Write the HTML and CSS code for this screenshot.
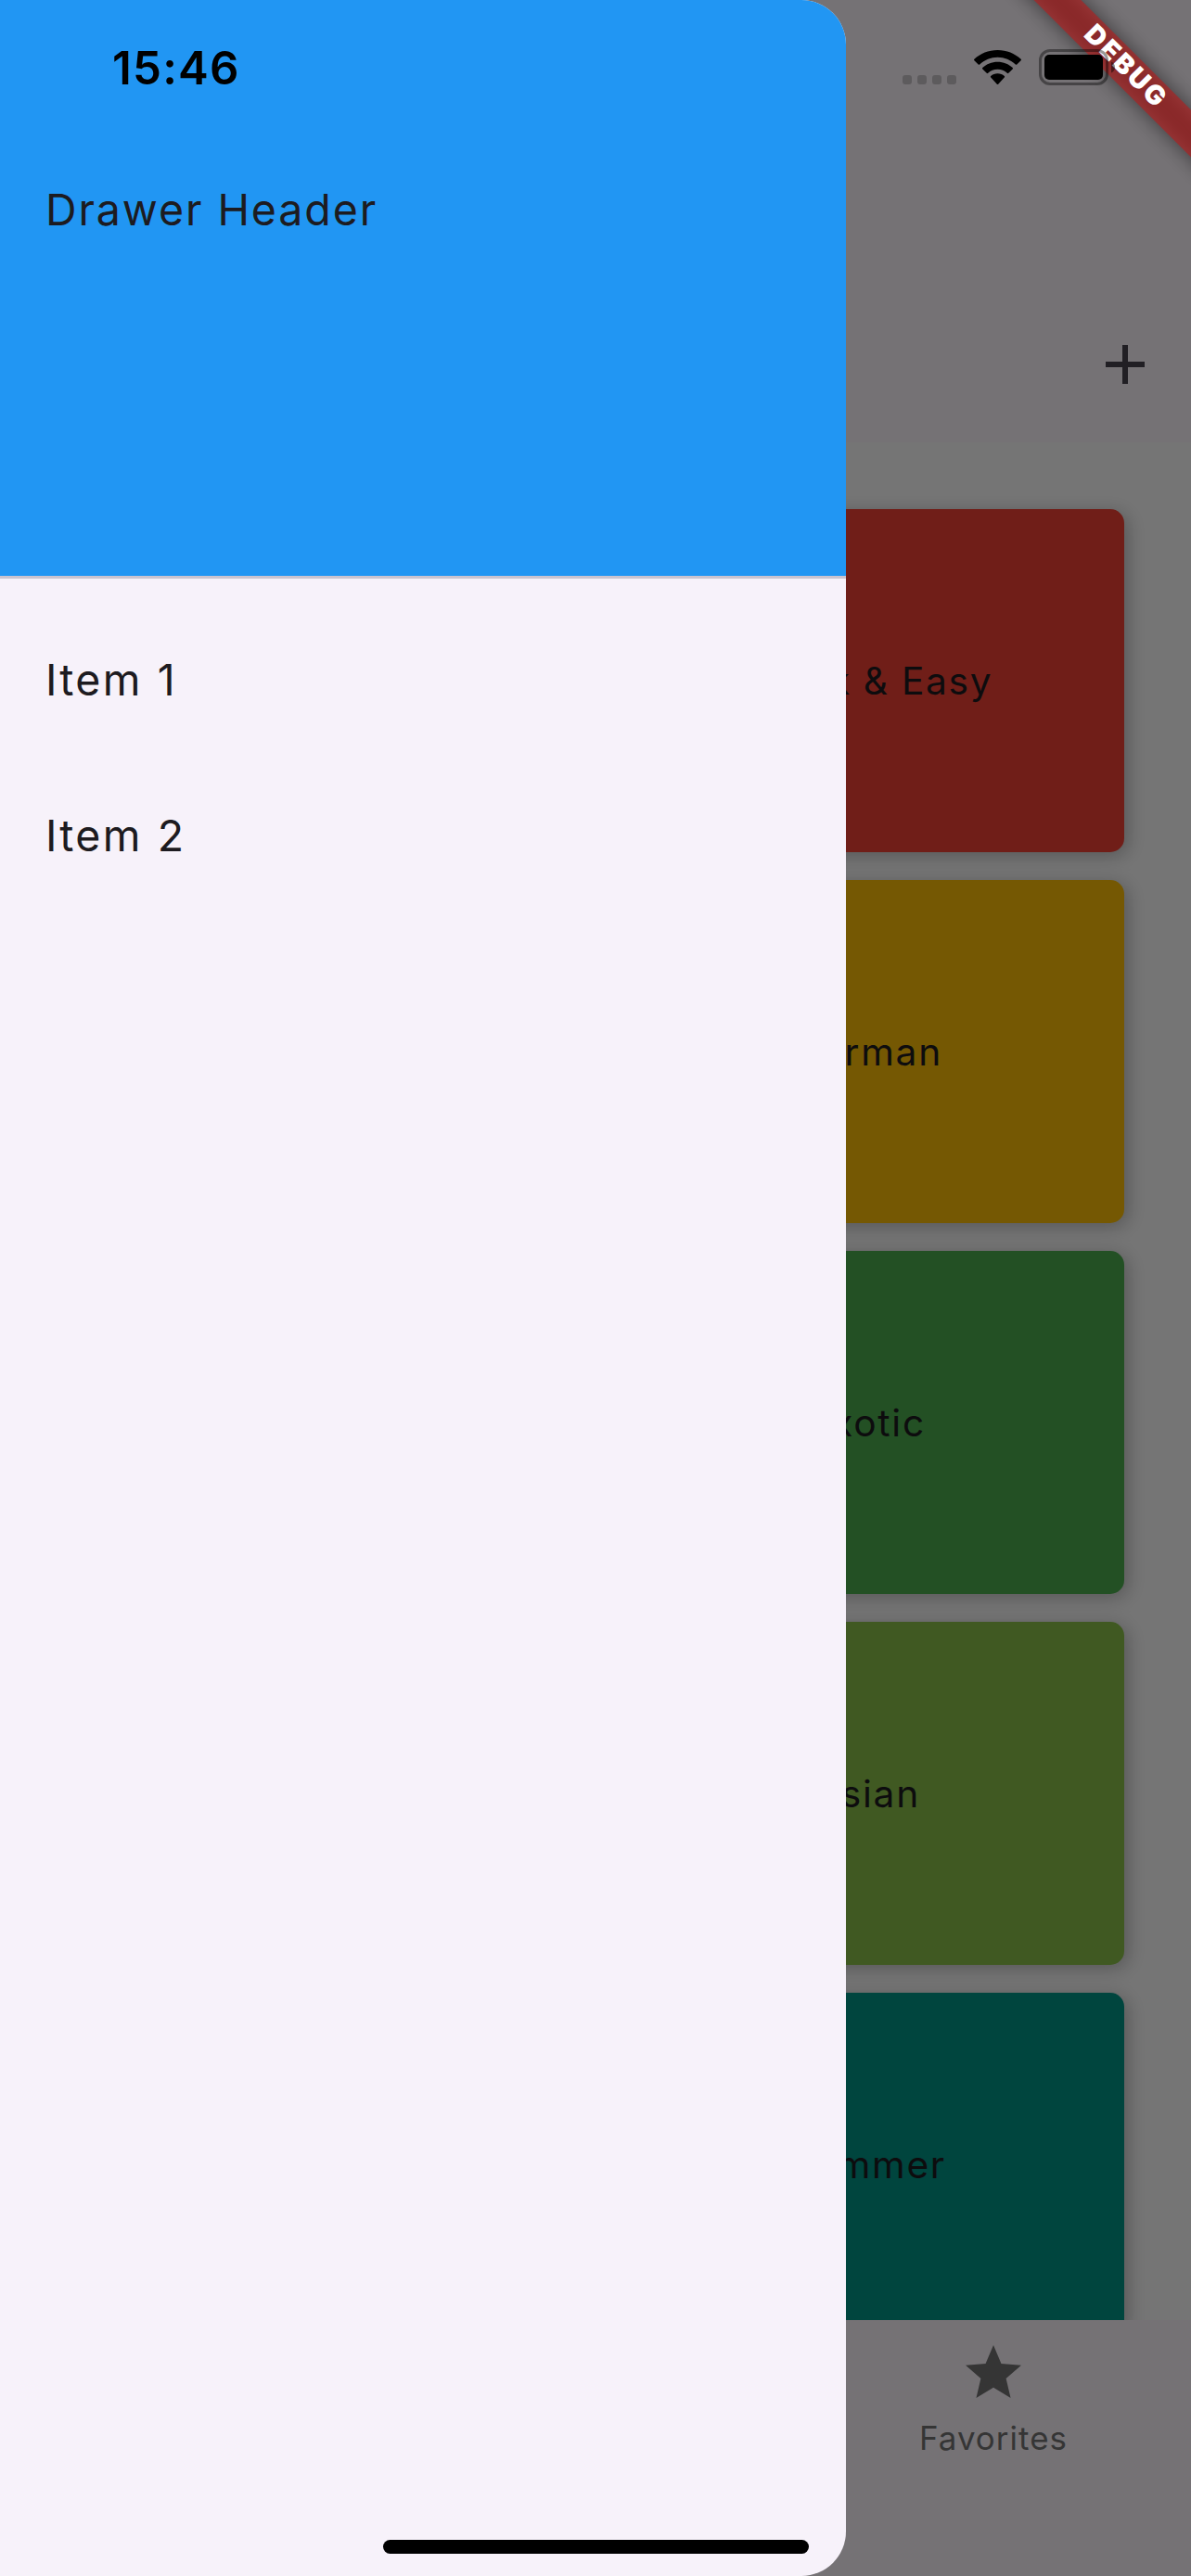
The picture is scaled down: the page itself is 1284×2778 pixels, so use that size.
FILE: index.html
```
<!DOCTYPE html>
<html lang="en">
<head>
<meta charset="utf-8">
<title>Categories</title>
<link rel="stylesheet" href="styles.css">
</head>
<body>
<div class="screen">
  <div class="app">
    <header class="app-bar">
      <svg class="add-icon" viewBox="0 0 24 24"><path d="M19 13h-6v6h-2v-6H5v-2h6V5h2v6h6v2z"/></svg>
    </header>
    <main class="grid">
      <article class="card red">Quick &amp; Easy</article>
      <article class="card amber">German</article>
      <article class="card green">Exotic</article>
      <article class="card light-green">Asian</article>
      <article class="card teal">Summer</article>
    </main>
    <nav class="tabs">
      <div class="tab">
        <svg class="tab-icon" viewBox="0 0 24 24"><path d="M12 17.27L18.18 21l-1.64-7.03L22 9.24l-7.19-.61L12 2 9.19 8.63 2 9.24l5.46 4.73L5.82 21z"/></svg>
        <span>Favorites</span>
      </div>
    </nav>
  </div>

  <div class="scrim"></div>

  <aside class="drawer">
    <div class="drawer-header">Drawer Header</div>
    <ul class="drawer-list">
      <li class="drawer-item">Item 1</li>
      <li class="drawer-item">Item 2</li>
    </ul>
  </aside>

  <div class="banner"><span class="banner-text">DEBUG</span></div>

  <div class="status-bar">
    <time class="clock">15:46</time>
    <div class="status-icons">
      <svg class="signal" width="59" height="10" viewBox="0 0 59 10">
        <rect width="10" height="10" rx="3"/><rect x="16" width="10" height="10" rx="3"/><rect x="32" width="10" height="10" rx="3"/><rect x="48" width="10" height="10" rx="3"/>
      </svg>
      <svg class="wifi" width="51" height="38" viewBox="0 0 51 38">
        <path d="M25.5 0C35.300 0 44 3.700 50.600 9.700q.7.700 0 1.500L46.300 15.500q-.7.700-1.500 0C39.600 10.700 32.900 7.700 25.500 7.700S11.400 10.700 6.200 15.500q-.8.700-1.500 0L.4 11.200q-.7-.8 0-1.500C7 3.700 15.700 0 25.500 0z"/>
        <path d="M25.500 12.700c6.300 0 12 2.400 16.200 6.300q.7.700 0 1.500l-4.400 4.300q-.7.700-1.500 0c-2.700-2.500-6.300-4-10.300-4s-7.600 1.500-10.300 4q-.8.700-1.500 0L9.300 20.500q-.7-.8 0-1.500c4.200-3.900 9.900-6.300 16.200-6.300z"/>
        <path d="M25.500 25.300c2.800 0 5.400 1 7.300 2.700q.8.700 0 1.500l-6.600 7.200q-.7.700-1.400 0l-6.600-7.200q-.8-.8 0-1.500c1.900-1.700 4.500-2.700 7.300-2.700z"/>
      </svg>
      <svg class="battery" width="82" height="39" viewBox="0 0 82 39">
        <rect x="1.500" y="1.500" width="72" height="36" rx="10.500" fill="none" stroke="#000" stroke-opacity=".4" stroke-width="3"/>
        <rect x="6" y="6" width="63" height="27" rx="5"/>
        <path d="M78 13.500c2.600 1.100 4 3.300 4 6s-1.400 4.900-4 6z" fill-opacity=".45"/>
      </svg>
    </div>
  </div>

  <div class="home-indicator"></div>
</div>
</body>
</html>
```
FILE: styles.css
```
* {
  box-sizing: border-box;
}

body {
  margin: 0;
  font-family: "Inter", "Liberation Sans", sans-serif;
  color: #1d1b20;
}

.screen {
  position: relative;
  width: 1284px;
  height: 2778px;
  overflow: hidden;
}

.app {
  display: flex;
  flex-direction: column;
  height: 100%;
  background: #fff;
}

.app-bar {
  display: flex;
  justify-content: flex-end;
  align-items: flex-end;
  flex: none;
  height: 477px;
  padding: 0 35px 48px 0;
  background: #fef9ff;
}

.add-icon {
  width: 72px;
  height: 72px;
  fill: #49454f;
}

.grid {
  display: grid;
  grid-template-columns: 1fr 1fr;
  grid-auto-rows: 370px;
  gap: 30px;
  flex: 1;
  min-height: 0;
  padding: 72px;
  overflow: hidden;
}

.card {
  display: flex;
  grid-column: 2;
  align-items: center;
  justify-content: center;
  border-radius: 15px;
  box-shadow: 4px 4px 20px rgba(0, 0, 0, .26);
  font-size: 40.7px;
  letter-spacing: 1.7px;
}

.red { background: #f44336; }
.amber { background: #ffc107; }
.green { background: #4caf50; }
.light-green { background: #8bc34a; }
.teal { background: #009688; }

.tabs {
  display: grid;
  grid-template-columns: repeat(3, 1fr);
  flex: none;
  height: 276px;
  background: #fef9ff;
}

.tab {
  display: flex;
  grid-column: 3;
  flex-direction: column;
  align-items: center;
  padding: 21px 0 0 2px;
  color: #757575;
  font-size: 34.9px;
  line-height: 42px;
  letter-spacing: 1.05px;
}

.tab-icon {
  width: 72px;
  height: 72px;
  margin-bottom: 13px;
  fill: currentColor;
}

.scrim {
  position: absolute;
  inset: 0;
  background: rgba(0, 0, 0, .54);
}

.drawer {
  position: absolute;
  inset: 0 auto 0 0;
  width: 912px;
  overflow: hidden;
  border-radius: 0 48px 48px 0;
  background: #f7f2fa;
  font-size: 46.5px;
  letter-spacing: 1.9px;
}

.drawer-header {
  height: 624px;
  padding: 190px 49px 0;
  border-bottom: 3px solid #cac4d0;
  background: #2196f3;
  line-height: 72px;
}

.drawer-list {
  margin: 0;
  padding: 25px 0 0;
  list-style: none;
}

.drawer-item {
  display: flex;
  align-items: center;
  height: 168px;
  padding: 0 49px;
  letter-spacing: 2.2px;
  word-spacing: 1px;
}

.banner {
  position: absolute;
  top: 54px;
  left: 1062px;
  display: flex;
  align-items: center;
  justify-content: center;
  width: 300px;
  height: 36px;
  padding-bottom: 4px;
  transform: rotate(45deg);
}

.banner::before,
.banner::after {
  content: "";
  position: absolute;
  inset: 0;
}

.banner::before {
  background: rgba(0, 0, 0, .5);
  filter: blur(11px);
}

.banner::after {
  background: rgba(183, 28, 28, .627);
}

.banner-text {
  position: relative;
  z-index: 1;
  margin-right: -2.600px;
  color: #fff;
  font-size: 28.8px;
  font-weight: 900;
  line-height: 32px;
  letter-spacing: 2.600px;
}

.status-bar {
  position: absolute;
  inset: 0 0 auto 0;
  display: flex;
  justify-content: space-between;
  height: 141px;
  padding: 0 82px 0 121px;
  color: #000;
}

.clock {
  padding-top: 43px;
  font-size: 49.2px;
  font-weight: 600;
  line-height: 60px;
  letter-spacing: 1.2px;
}

.status-icons {
  display: flex;
  align-items: flex-start;
}

.signal {
  margin: 81px 18px 0 0;
  fill-opacity: .2;
}

.wifi {
  margin: 54px 19px 0 0;
}

.battery {
  margin-top: 53px;
}

.home-indicator {
  position: absolute;
  bottom: 24px;
  left: 413px;
  width: 459px;
  height: 15px;
  border-radius: 8px;
  background: #000;
}
```
